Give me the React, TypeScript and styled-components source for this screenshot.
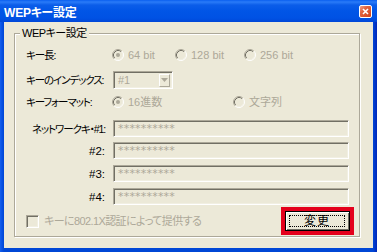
import React from 'react';
import styled, { createGlobalStyle } from 'styled-components';

const Global = createGlobalStyle`
  html, body { margin: 0; padding: 0; background: #ece9d8; }
  body { width: 377px; height: 252px; overflow: hidden; }
`;

const FONT = `"Liberation Sans", "Noto Sans CJK JP", sans-serif`;

const Window = styled.div`
  width: 377px;
  height: 252px;
  display: flex;
  flex-direction: column;
  font-family: ${FONT};
  font-size: 11px;
  font-feature-settings: "palt";
  color: #000;
`;

const TitleBar = styled.div`
  height: 22px;
  flex: none;
  display: flex;
  align-items: center;
  padding: 0 5px 0 4px;
  background: linear-gradient(
    to bottom,
    #0a5fef 0px,
    #2a7bf8 2px,
    #0b5de9 5px,
    #0155e6 11px,
    #0052e4 18px,
    #0047d8 22px
  );
`;

const Title = styled.div`
  flex: 1;
  color: #fff;
  font-weight: bold;
  font-size: 12px;
  letter-spacing: -0.2px;
`;

const CloseButton = styled.div`
  width: 13px;
  height: 13px;
  box-sizing: border-box;
  border: 1px solid #fff;
  border-radius: 2px;
  background: linear-gradient(135deg, #f0a088 0%, #e06440 35%, #d0441c 100%);
  display: flex;
  align-items: center;
  justify-content: center;
`;

const Frame = styled.div`
  flex: 1;
  display: flex;
  padding: 0 4px 4px 4px;
  background: linear-gradient(to right, #1660ee 0px, #0751e2 2px, #0047d6 4px, #0047d6 373px, #0036c8 375px, #0028b8 377px);
`;

const Client = styled.div`
  flex: 1;
  background: #ece9d8;
  padding: 5px 0 0 10px;
`;

const Group = styled.fieldset`
  margin: 0;
  width: 346px;
  box-sizing: border-box;
  padding: 6px 9px 5px 11px;
  border: 1px solid #aca899;
  box-shadow: 1px 1px 0 #fff, inset 1px 1px 0 #fff;
  min-width: 0;
`;

const Legend = styled.legend`
  margin-left: -6px;
  padding: 0 2px;
  line-height: 13px;
  height: 13px;
  font-size: 11px;
  letter-spacing: -0.5px;
  background: #ece9d8;
`;

const Row = styled.div<{ $h: number; $mt: number }>`
  display: flex;
  align-items: center;
  height: ${p => p.$h}px;
  margin-top: ${p => p.$mt}px;
`;

const Label = styled.div<{ $right?: boolean; $plain?: boolean }>`
  width: 87px;
  flex: none;
  box-sizing: border-box;
  padding-right: ${p => (p.$right ? 8 : 0)}px;
  text-align: ${p => (p.$right ? 'right' : 'left')};
  white-space: nowrap;
  font-size: ${p => (p.$plain ? 11.5 : 10.5)}px;
  letter-spacing: ${p => (p.$plain ? 0 : -1.1)}px;
  line-height: 14px;
`;

const RadioOption = styled.div<{ $w?: number }>`
  display: flex;
  align-items: center;
  gap: 4px;
  width: ${p => (p.$w ? `${p.$w}px` : 'auto')};
  flex: none;
  color: #aca899;
  white-space: nowrap;
  line-height: 14px;
`;

const RadioRow = styled.div`
  display: flex;
  align-items: center;
  margin-left: -1px;
`;

const sunken = `
  box-sizing: border-box;
  border: 1px solid;
  border-color: #aca899 #fff #fff #aca899;
  box-shadow: inset 1px 1px 0 #716f64, inset -1px -1px 0 #f1efe2;
`;

const Select = styled.div`
  ${sunken}
  width: 60px;
  height: 18px;
  display: flex;
  align-items: center;
  padding: 0 2px 0 4px;
  color: #aca899;
  background: #ece9d8;
`;

const SelectValue = styled.span`
  flex: 1;
  line-height: 14px;
`;

const DropButton = styled.div`
  width: 11px;
  height: 13px;
  box-sizing: border-box;
  border: 1px solid;
  border-color: #fff #aca899 #aca899 #fff;
  background: #ece9d8;
  display: flex;
  align-items: center;
  justify-content: center;
`;

const TextBox = styled.div`
  ${sunken}
  width: 236px;
  height: 17px;
  padding: 0 0 0 4px;
  display: flex;
  align-items: center;
  color: #aca899;
  font-family: "DejaVu Sans", sans-serif;
  font-size: 11px;
  letter-spacing: 0.2px;
  line-height: 13px;
`;

const CheckOption = styled.div`
  flex: 1;
  display: flex;
  align-items: center;
  gap: 5px;
  color: #aca899;
  white-space: nowrap;
  letter-spacing: -0.6px;
  line-height: 14px;
`;

const CheckBox = styled.div`
  ${sunken}
  width: 13px;
  height: 13px;
  background: #ece9d8;
`;

const Button = styled.button`
  width: 65px;
  height: 20px;
  flex: none;
  box-sizing: border-box;
  padding: 3px 4px 3px 3px;
  display: flex;
  background: #ece9d8;
  border: 1px solid #000;
  box-shadow: inset 1px 1px 0 #fff, inset -1px -1px 0 #716f64;
  outline: 4px solid #e4001c;
  font-family: ${FONT};
  font-size: 12px;
  color: #000;
`;

const FocusRect = styled.span`
  flex: 1;
  border: 1px dotted #000;
  display: flex;
  align-items: center;
  justify-content: center;
  letter-spacing: 1px;
  line-height: 10px;
`;

const Radio = ({ checked }: { checked?: boolean }) => (
  <svg width="12" height="12" viewBox="0 0 12 12">
    <circle cx="6" cy="6" r="4.5" fill="#ece9d8" />
    <path d="M2.11 9.89A5.5 5.5 0 0 1 9.89 2.11" stroke="#aca899" fill="none" />
    <path d="M9.89 2.11A5.5 5.5 0 0 1 2.11 9.89" stroke="#fff" fill="none" />
    <path d="M2.82 9.18A4.5 4.5 0 0 1 9.18 2.82" stroke="#716f64" fill="none" />
    <path d="M9.18 2.82A4.5 4.5 0 0 1 2.82 9.18" stroke="#f1efe2" fill="none" />
    {checked && <circle cx="6" cy="6" r="2" fill="#aca899" />}
  </svg>
);

const keys = ['ネットワークキ・#1:', '#2:', '#3:', '#4:'];

export default function App() {
  return (
    <>
      <Global />
      <Window>
        <TitleBar>
          <Title>WEPキー設定</Title>
          <CloseButton>
            <svg width="7" height="7" viewBox="0 0 7 7">
              <path d="M1 1L6 6M6 1L1 6" stroke="#fff" strokeWidth="1.6" />
            </svg>
          </CloseButton>
        </TitleBar>
        <Frame>
          <Client>
            <Group>
              <Legend>WEPキー設定</Legend>
              <Row $h={18} $mt={0}>
                <Label>キー長:</Label>
                <RadioRow>
                  <RadioOption $w={63}><Radio checked />64 bit</RadioOption>
                  <RadioOption $w={69}><Radio />128 bit</RadioOption>
                  <RadioOption><Radio />256 bit</RadioOption>
                </RadioRow>
              </Row>
              <Row $h={18} $mt={7}>
                <Label>キーのインデックス:</Label>
                <Select>
                  <SelectValue>#1</SelectValue>
                  <DropButton>
                    <svg width="7" height="4" viewBox="0 0 7 4">
                      <path d="M0 0H7L3.5 4Z" fill="#aca899" />
                    </svg>
                  </DropButton>
                </Select>
              </Row>
              <Row $h={18} $mt={4}>
                <Label>キーフォーマット:</Label>
                <RadioRow>
                  <RadioOption $w={121}><Radio checked />16進数</RadioOption>
                  <RadioOption><Radio />文字列</RadioOption>
                </RadioRow>
              </Row>
              {keys.map((k, i) => (
                <Row key={k} $h={17} $mt={i === 0 ? 9 : i === 1 ? 5 : 6}>
                  <Label $right $plain={i > 0}>{k}</Label>
                  <TextBox>**********</TextBox>
                </Row>
              ))}
              <Row $h={20} $mt={6}>
                <CheckOption>
                  <CheckBox />
                  キーに802.1X認証によって提供する
                </CheckOption>
                <Button>
                  <FocusRect>変更</FocusRect>
                </Button>
              </Row>
            </Group>
          </Client>
        </Frame>
      </Window>
    </>
  );
}
